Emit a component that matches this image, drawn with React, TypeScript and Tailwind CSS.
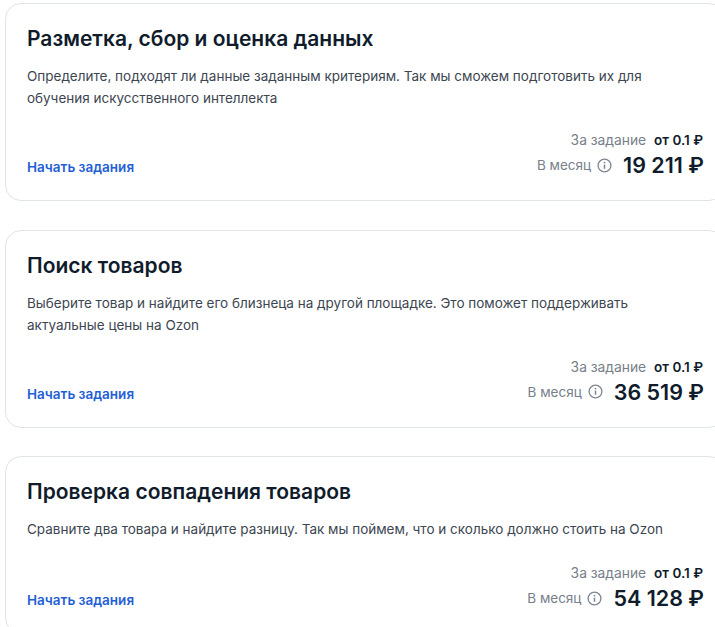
const cards = [
  { title: "Разметка, сбор и оценка данных", lines: ["Определите, подходят ли данные заданным критериям. Так мы сможем подготовить их для", "обучения искусственного интеллекта"], month: "19 211 ₽" },
  { title: "Поиск товаров", lines: ["Выберите товар и найдите его близнеца на другой площадке. Это поможет поддерживать", "актуальные цены на Ozon"], month: "36 519 ₽" },
  { title: "Проверка совпадения товаров", lines: ["Сравните два товара и найдите разницу. Так мы поймем, что и сколько должно стоить на Ozon"], month: "54 128 ₽" },
];

function Info() {
  return (
    <svg width="15" height="15" viewBox="0 0 15 15" fill="none" className="shrink-0">
      <circle cx="7.5" cy="7.5" r="6.4" stroke="#7d8690" strokeWidth="1.3" />
      <path d="M7.5 6.6V10.8" stroke="#7d8690" strokeWidth="1.5" />
      <circle cx="7.5" cy="4.6" r="0.9" fill="#7d8690" />
    </svg>
  );
}

export default function App() {
  return (
    <div className="h-[627px] w-[715px] overflow-hidden bg-white pl-[5px] pt-[3px] font-['Inter',sans-serif]">
      <div className="flex w-[720px] flex-col gap-[28.5px]">
        {cards.map((c) => (
          <div key={c.title} className="flex shrink-0 flex-col rounded-[16px] border border-[#dfe4e9] pl-[21px] pr-[21px] pt-[20px] pb-[21px]">
            <h2 className="text-[21px] leading-[30px] font-semibold text-[#101c2b]">{c.title}</h2>
            <div className="mt-[11px] min-h-[24px] text-[13.5px] leading-[22px] text-[#3c4650]">
              {c.lines.map((l) => (
                <div key={l} className="whitespace-nowrap">{l}</div>
              ))}
            </div>
            <div className="mt-[21px] flex items-end justify-between">
              <span className="mb-[2px] text-[13.5px] leading-[20px] font-semibold text-[#1f5fd6]">Начать задания</span>
              <div className="flex flex-col items-end">
                <div className="flex items-center text-[13.8px] leading-[20px]">
                  <span className="text-[#77808a]">За задание</span>
                  <span className="ml-[8px] text-[13.5px] font-semibold text-[#101c2b]">от 0.1 ₽</span>
                </div>
                <div className="mt-[1px] -mr-px flex items-center">
                  <span className="text-[13.5px] leading-[24px] text-[#77808a]">В месяц</span>
                  <span className="ml-[6px] flex"><Info /></span>
                  <span className="ml-[11px] text-[21.5px] leading-[28px] font-semibold text-[#101c2b]">{c.month}</span>
                </div>
              </div>
            </div>
          </div>
        ))}
      </div>
    </div>
  );
}
